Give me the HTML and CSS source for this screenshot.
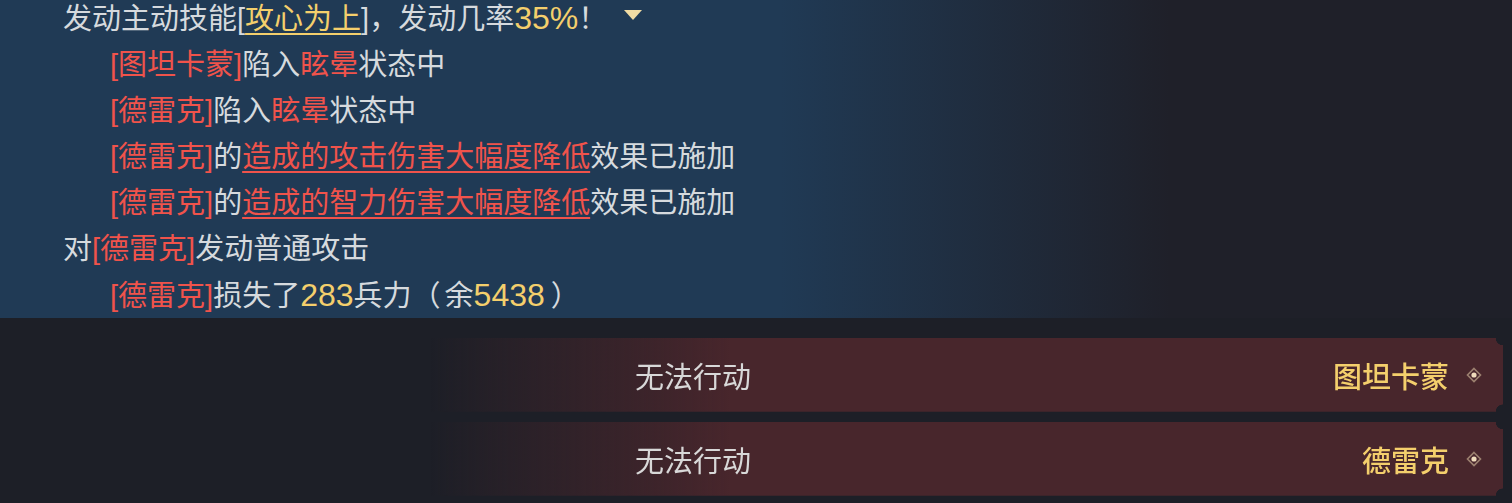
FILE: index.html
```html
<!doctype html>
<html>
<head>
  <meta charset="UTF-8" />
  <title>战报</title>
  <link rel="stylesheet" href="styles.css">
</head>
<body>
  <div class="log">
    <div class="log-lines">
      <p class="line first">发动主动技能[<span class="skill">攻心为上</span>]，发动几率<span class="num">35%</span>！<svg class="caret" width="20" height="12" viewBox="0 0 20 12"><path d="M1 1 H19 L10 11 Z" fill="#f1dca4"/></svg></p>
      <p class="line sub"><span class="name">[图坦卡蒙]</span>陷入<span class="bad">眩晕</span>状态中</p>
      <p class="line sub"><span class="name">[德雷克]</span>陷入<span class="bad">眩晕</span>状态中</p>
      <p class="line sub"><span class="name">[德雷克]</span>的<span class="effect">造成的攻击伤害大幅度降低</span>效果已施加</p>
      <p class="line sub"><span class="name">[德雷克]</span>的<span class="effect">造成的智力伤害大幅度降低</span>效果已施加</p>
      <p class="line">对<span class="name">[德雷克]</span>发动普通攻击</p>
      <p class="line sub"><span class="name">[德雷克]</span>损失了<span class="num">283</span>兵力<span class="paren-open">（</span>余<span class="num">5438</span><span class="paren-close">）</span></p>
    </div>
  </div>

  <div class="status-list">
    <div class="status">
      <span class="status-text">无法行动</span>
      <span class="status-name">图坦卡蒙</span>
      <svg class="gem" width="16" height="16" viewBox="0 0 16 16"><path d="M8 1.5 L14.5 8 L8 14.5 L1.5 8 Z" fill="none" stroke="#9c8070" stroke-width="1.6"/><circle cx="8" cy="8" r="2.6" fill="#efdcbc"/></svg>
    </div>
    <div class="status">
      <span class="status-text">无法行动</span>
      <span class="status-name">德雷克</span>
      <svg class="gem" width="16" height="16" viewBox="0 0 16 16"><path d="M8 1.5 L14.5 8 L8 14.5 L1.5 8 Z" fill="none" stroke="#9c8070" stroke-width="1.6"/><circle cx="8" cy="8" r="2.6" fill="#efdcbc"/></svg>
    </div>
  </div>
</body>
</html>
```

FILE: styles.css
```css
html, body {
  margin: 0;
  padding: 0;
  background: #1d1f27;
  font-family: "Liberation Sans", "Noto Sans CJK SC", sans-serif;
  color: #d6dade;
  overflow: hidden;
}
.log {
  height: 318px;
  overflow: hidden;
  background: linear-gradient(to right, #203a55 0, #203a55 780px, #1f2029 1170px);
}
.log-lines {
  padding-left: 63px;
}
.line {
  margin: 0;
  font-size: 29px;
  line-height: 46px;
  white-space: nowrap;
}
.line.first {
  line-height: 36px;
  padding-bottom: 5px;
}
.line.sub {
  padding-left: 47px;
}
.name, .bad {
  color: #f0534b;
}
.skill {
  color: #f4cf6c;
  text-decoration: underline;
  text-underline-offset: 4px;
  text-decoration-thickness: 2px;
}
.effect {
  color: #f0534b;
  text-decoration: underline;
  text-underline-offset: 4px;
  text-decoration-thickness: 2px;
}
.num {
  color: #f4cf6c;
  font-size: 32px;
}
.paren-open {
  margin-right: 4px;
}
.paren-close {
  margin-left: 6px;
}
.caret {
  margin-left: 16px;
  vertical-align: 8px;
}
.status-list {
  display: flex;
  flex-direction: column;
  gap: 10px;
  padding-top: 20px;
}
.status {
  display: flex;
  align-items: center;
  height: 74px;
  margin-left: 430px;
  margin-right: 9px;
  padding-left: 205px;
  padding-right: 21px;
  background: linear-gradient(to right, rgba(72, 38, 44, 0) 0, #48262c 300px);
  -webkit-mask: radial-gradient(circle at 100% 0, transparent 7px, #000 7.5px) top / 100% 51% no-repeat,
    radial-gradient(circle at 100% 100%, transparent 7px, #000 7.5px) bottom / 100% 51% no-repeat;
  mask: radial-gradient(circle at 100% 0, transparent 7px, #000 7.5px) top / 100% 51% no-repeat,
    radial-gradient(circle at 100% 100%, transparent 7px, #000 7.5px) bottom / 100% 51% no-repeat;
}
.status-text {
  flex: 1;
  font-size: 29px;
  color: #d8d8d8;
}
.status-name {
  font-size: 29px;
  font-weight: 500;
  color: #f4cf6c;
}
.gem {
  margin-left: 17px;
}
```
